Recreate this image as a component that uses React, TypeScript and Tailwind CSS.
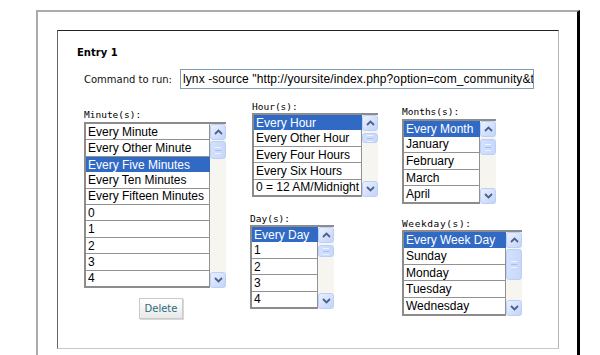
const minuteItems = [
  "Every Minute",
  "Every Other Minute",
  "Every Five Minutes",
  "Every Ten Minutes",
  "Every Fifteen Minutes",
  "0",
  "1",
  "2",
  "3",
  "4",
];
const hourItems = ["Every Hour", "Every Other Hour", "Every Four Hours", "Every Six Hours", "0 = 12 AM/Midnight"];
const dayItems = ["Every Day", "1", "2", "3", "4"];
const monthItems = ["Every Month", "January", "February", "March", "April"];
const weekdayItems = ["Every Week Day", "Sunday", "Monday", "Tuesday", "Wednesday"];

function Chevron({ up }: { up?: boolean }) {
  return (
    <svg width="9" height="6" viewBox="0 0 9 6">
      <path
        d={up ? "M1 5 L4.5 1.5 L8 5" : "M1 1 L4.5 4.5 L8 1"}
        stroke="#4d6185"
        strokeWidth="1.8"
        fill="none"
      />
    </svg>
  );
}

function ScrollButton({ up }: { up?: boolean }) {
  return (
    <div className="flex h-[16px] w-[16px] items-center justify-center rounded-[3px] border border-[#bccff6] bg-gradient-to-br from-[#eaf0ff] to-[#c2d4fa]">
      <Chevron up={up} />
    </div>
  );
}

function ScrollBar({ thumb }: { thumb: string }) {
  return (
    <div className="flex h-full w-[16px] shrink-0 flex-col bg-[#f6f5f0]">
      <ScrollButton up />
      <div
        className={`${thumb} flex w-[16px] flex-col items-center justify-center gap-[2px] rounded-[3px] border border-[#bccff6] bg-gradient-to-r from-[#d3e0fd] to-[#c8d8fb]`}
      >
        <span className="h-px w-[6px] bg-[#eef3ff]" />
        <span className="h-px w-[6px] bg-[#a5bef3]" />
        <span className="h-px w-[6px] bg-[#eef3ff]" />
      </div>
      <div className="mt-auto">
        <ScrollButton />
      </div>
    </div>
  );
}

function ListBox({
  items,
  sel,
  box,
  thumb,
}: {
  items: string[];
  sel: number;
  box: string;
  thumb: string;
}) {
  return (
    <div className={`${box} flex border-l-2 border-t-2 border-[#8c8c8c]`}>
      <div className="flex min-w-0 flex-1 flex-col border-b-2 border-[#8c8c8c]">
        {items.map((it, i) => (
          <div
            key={i}
            className={
              i === sel
                ? "flex min-h-0 flex-1 items-center overflow-hidden whitespace-nowrap bg-[#316ac5] px-[2px] text-white"
                : "flex min-h-0 flex-1 items-center overflow-hidden whitespace-nowrap border-b border-r border-[#929292] bg-white px-[2px] text-black last:border-b-0"
            }
          >
            {it}
          </div>
        ))}
      </div>
      <ScrollBar thumb={thumb} />
    </div>
  );
}

function Label({ children, className = "" }: { children: React.ReactNode; className?: string }) {
  return (
    <div className={`h-[12px] font-['DejaVu_Sans_Mono',monospace] text-[9.5px] leading-[12px] text-black ${className}`}>
      {children}
    </div>
  );
}

export default function App() {
  return (
    <div className="h-[355px] w-[600px] overflow-hidden bg-white font-['Liberation_Sans',Arial,sans-serif]">
      {/* outer frame */}
      <div className="ml-[36px] mt-[10px] h-[360px] w-[544px] border-l-2 border-t-2 border-r-[3px] border-[#ababab] border-r-black pl-[19px] pt-[18px]">
        {/* entry box */}
        <div className="h-[319px] w-[502px] border border-b-[#c8c8c8] border-l-[#666] border-r-[#b5b5b5] border-t-[#222] pl-[19px] pt-[16px]">
          <div className="font-['DejaVu_Sans',Verdana,sans-serif] text-[10px] font-bold leading-[12px] text-black">
            Entry 1
          </div>

          <div className="ml-[7px] mt-[10px] flex items-center">
            <span className="w-[96px] font-['DejaVu_Sans',Verdana,sans-serif] text-[10px] text-[#111]">
              Command to run:
            </span>
            <div className="h-[20px] w-[354px] overflow-hidden whitespace-nowrap border border-[#7f9db9] px-[2px] text-[12px] leading-[18px] tracking-[0.1px] text-black">
              lynx -source "http://yoursite/index.php?option=com_community&t
            </div>
          </div>

          <div className="ml-[7px] mt-[12px] flex items-start gap-6 text-[12px]">
            {/* minutes */}
            <div className="mt-[8px] flex flex-col">
              <Label className="mb-[1px]">Minute(s):</Label>
              <ListBox items={minuteItems} sel={2} box="h-[166px] w-[142px]" thumb="mt-[1px] h-[18px]" />
              <button className="ml-[55px] mt-[10px] h-[21px] w-[44px] border border-[#c9c9c9] bg-gradient-to-b from-white to-[#e9e9e9] font-['DejaVu_Sans',Verdana,sans-serif] text-[10px] text-[#2d6c7a] shadow-[1px_1px_0_#d8d8d8]">
                Delete
              </button>
            </div>

            {/* hours / days */}
            <div className="flex w-[128px] flex-col">
              <Label className="ml-[2px]">Hour(s):</Label>
              <ListBox items={hourItems} sel={0} box="ml-[2px] h-[84px] w-[126px]" thumb="mt-[2px] h-[10px]" />
              <Label className="mt-[16px]">Day(s):</Label>
              <ListBox items={dayItems} sel={0} box="h-[84px] w-[84px]" thumb="mt-[2px] h-[12px]" />
            </div>

            {/* months / weekdays */}
            <div className="mt-[5px] flex flex-col">
              <Label className="mb-[1px]">Months(s):</Label>
              <ListBox items={monthItems} sel={0} box="h-[85px] w-[94px]" thumb="mt-[2px] h-[16px]" />
              <Label className="mt-[14px] tracking-[0.6px]">Weekday(s):</Label>
              <ListBox items={weekdayItems} sel={0} box="h-[86px] w-[120px]" thumb="mt-[1px] h-[31px]" />
            </div>
          </div>
        </div>
      </div>
    </div>
  );
}
